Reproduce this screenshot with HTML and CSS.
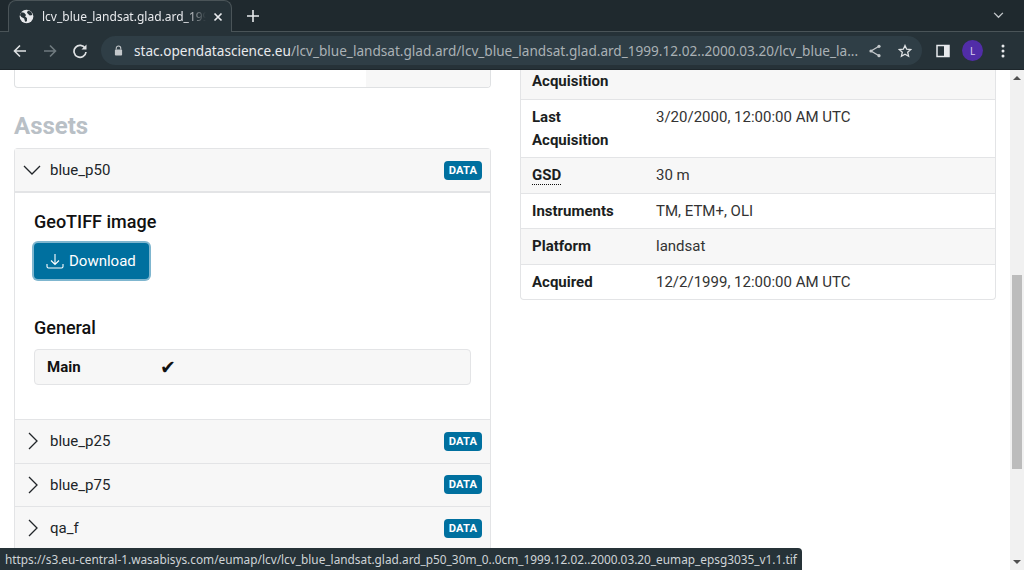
FILE: index.html
```html
<!DOCTYPE html>
<html lang="en">
<head>
<meta charset="utf-8">
<title>lcv_blue_landsat.glad.ard_1999</title>
<link rel="stylesheet" href="styles.css">
</head>
<body>
<header class="chrome">
  <div class="tabstrip">
    <div class="tab">
      <svg class="globe" viewBox="0 0 16 16" width="15" height="15"><circle cx="8" cy="8" r="7.300" fill="#e8eaed"/><path d="M2.500 3.500l3 .5 2 2.500-1 1.500 2 1.500v3.500l-2 .5-1-3.500-3-1.500-1.500-2zM9.500 1.500l3.500 1.500 1.300 3.500-2.800.5-1.500-1.500-1.500-1.500z" fill="#263238"/></svg>
      <span class="tab-title">lcv_blue_landsat.glad.ard_199</span>
      <svg class="tab-close" viewBox="0 0 10 10" width="10" height="10"><path d="M1.500 1.500l7 7M8.500 1.500l-7 7" stroke="#e8eaed" stroke-width="1.700"/></svg>
    </div>
    <svg class="newtab" viewBox="0 0 12 12" width="12" height="12"><path d="M6 0v12M0 6h12" stroke="#e8eaed" stroke-width="1.600"/></svg>
    <svg class="tabs-menu" viewBox="0 0 12 8" width="11" height="7"><path d="M1 1l5 5 5-5" fill="none" stroke="#c4c8cb" stroke-width="1.500"/></svg>
  </div>
  <div class="toolbar">
    <svg class="nav-icon" viewBox="0 0 16 16" width="16" height="16"><path d="M14 8H2.500M8 2.500L2.500 8 8 13.500" fill="none" stroke="#dfe2e4" stroke-width="1.600"/></svg>
    <svg class="nav-icon" viewBox="0 0 16 16" width="16" height="16"><path d="M2 8h11.500M8 2.500L13.500 8 8 13.500" fill="none" stroke="#6f7a7f" stroke-width="1.600"/></svg>
    <svg class="nav-icon" viewBox="0 0 16 16" width="16" height="16"><path d="M13.200 5.300A6 6 0 1 0 14 9" fill="none" stroke="#dfe2e4" stroke-width="1.700"/><path d="M14.500 1.500v5h-5z" fill="#dfe2e4"/></svg>
    <div class="omnibox">
      <svg class="lock" viewBox="0 0 10 12" width="9" height="11"><path d="M2.500 5V3.500a2.500 2.500 0 0 1 5 0V5" fill="none" stroke="#c4c8cb" stroke-width="1.200"/><rect x="1" y="5" width="8" height="6.500" rx="1" fill="#c4c8cb"/></svg>
      <span class="url"><span class="host">stac.opendatascience.eu</span>/lcv_blue_landsat.glad.ard/lcv_blue_landsat.glad.ard_1999.12.02..2000.03.20/lcv_blue_la...</span>
      <svg class="omni-icon" viewBox="0 0 14 14" width="14" height="14"><path d="M11 2.300L3 7l8 4.700" fill="none" stroke="#c4c8cb" stroke-width="1.300"/><circle cx="11" cy="2.300" r="1.600" fill="#c4c8cb"/><circle cx="3" cy="7" r="1.600" fill="#c4c8cb"/><circle cx="11" cy="11.700" r="1.600" fill="#c4c8cb"/></svg>
      <svg class="omni-icon" viewBox="0 0 14 14" width="14" height="14"><path d="M7 1.500l1.700 3.700 4 .4-3 2.700.9 4L7 10.300l-3.600 2 .9-4-3-2.700 4-.4z" fill="none" stroke="#dfe2e4" stroke-width="1.300"/></svg>
    </div>
    <svg class="side-icon" viewBox="0 0 14 14" width="14" height="14"><rect x="1" y="1.500" width="12" height="11" fill="none" stroke="#e8eaed" stroke-width="1.500"/><rect x="8" y="1.500" width="5" height="11" fill="#e8eaed"/></svg>
    <span class="avatar">L</span>
    <svg class="dots" viewBox="0 0 4 14" width="4" height="14"><circle cx="2" cy="2" r="1.500" fill="#e8eaed"/><circle cx="2" cy="7" r="1.500" fill="#e8eaed"/><circle cx="2" cy="12" r="1.500" fill="#e8eaed"/></svg>
  </div>
</header>

<div class="viewport">
  <main class="page">
    <section class="col">
      <div class="cut-card"><div class="cut-fill"></div></div>
      <h2 class="assets-title">Assets</h2>
      <div class="accordion">
        <div class="acc-head open-head">
          <svg class="chev-down" viewBox="0 0 18 10" width="18" height="10"><path d="M1 1l8 8 8-8" fill="none" stroke="#212529" stroke-width="1.300"/></svg>
          <span class="acc-name">blue_p50</span>
          <span class="badge">DATA</span>
        </div>
        <div class="acc-body">
          <h3 class="media-title">GeoTIFF image</h3>
          <button class="download">
            <svg viewBox="0 0 18 16" width="18" height="16"><path d="M9 1v10M5 7.500L9 11.500l4-4M1 11v2.500a1.500 1.500 0 0 0 1.500 1.500h13a1.500 1.500 0 0 0 1.500-1.500V11" fill="none" stroke="#fff" stroke-width="1.100"/></svg>
            <span>Download</span>
          </button>
          <h4 class="group-title">General</h4>
          <div class="main-row"><span class="main-key">Main</span><span class="main-val">✔</span></div>
        </div>
        <div class="acc-head">
          <svg class="chev-right" viewBox="0 0 10 18" width="10" height="18"><path d="M1 1l8 8-8 8" fill="none" stroke="#212529" stroke-width="1.300"/></svg>
          <span class="acc-name">blue_p25</span>
          <span class="badge">DATA</span>
        </div>
        <div class="acc-head">
          <svg class="chev-right" viewBox="0 0 10 18" width="10" height="18"><path d="M1 1l8 8-8 8" fill="none" stroke="#212529" stroke-width="1.300"/></svg>
          <span class="acc-name">blue_p75</span>
          <span class="badge">DATA</span>
        </div>
        <div class="acc-head">
          <svg class="chev-right" viewBox="0 0 10 18" width="10" height="18"><path d="M1 1l8 8-8 8" fill="none" stroke="#212529" stroke-width="1.300"/></svg>
          <span class="acc-name">qa_f</span>
          <span class="badge">DATA</span>
        </div>
      </div>
    </section>
    <section class="col">
      <div class="meta">
        <div class="meta-row odd first"><span class="meta-key">Acquisition</span><span></span></div>
        <div class="meta-row two"><span class="meta-key">Last Acquisition</span><span>3/20/2000, 12:00:00 AM UTC</span></div>
        <div class="meta-row odd"><span class="meta-key"><abbr class="gsd">GSD</abbr></span><span>30 m</span></div>
        <div class="meta-row"><span class="meta-key">Instruments</span><span>TM, ETM+, OLI</span></div>
        <div class="meta-row odd"><span class="meta-key">Platform</span><span>landsat</span></div>
        <div class="meta-row last"><span class="meta-key">Acquired</span><span>12/2/1999, 12:00:00 AM UTC</span></div>
      </div>
    </section>
  </main>
  <div class="scrollbar">
    <span class="arrow-up"></span>
    <span class="thumb"></span>
    <span class="arrow-down"></span>
  </div>
  <div class="status">https://s3.eu-central-1.wasabisys.com/eumap/lcv/lcv_blue_landsat.glad.ard_p50_30m_0..0cm_1999.12.02..2000.03.20_eumap_epsg3035_v1.1.tif</div>
</div>
</body>
</html>
```
FILE: styles.css
```css
* { box-sizing: border-box; }
html, body { margin: 0; height: 570px; overflow: hidden; background: #fff; }
body { font-family: Roboto, "Liberation Sans", sans-serif; color: #212529; }

.chrome { height: 70px; background: #263238; border-bottom: 1px solid #1d262b; font-family: "Noto Sans", "Open Sans", sans-serif; }
.tabstrip { height: 32px; background: #1f292e; display: flex; align-items: center; border-bottom: 1px solid #4a5458; padding-left: 8px; }
.tab { width: 224px; height: 32px; background: #263238; border: 1px solid #4a5458; border-bottom: 0; border-radius: 8px 8px 0 0; display: flex; align-items: center; padding: 0 9px 0 10px; align-self: flex-start; }
.globe { flex: none; }
.tab-title { margin-left: 8px; width: 164px; overflow: hidden; white-space: nowrap; font-size: 12px; color: #e8eaed; flex: none; -webkit-mask-image: linear-gradient(90deg, #000 88%, transparent); mask-image: linear-gradient(90deg, #000 88%, transparent); }
.tab-close { margin-left: 7px; flex: none; }
.newtab { margin-left: 15px; flex: none; }
.tabs-menu { margin-left: auto; margin-right: 20px; flex: none; }

.toolbar { height: 37px; display: flex; align-items: center; padding-left: 12px; }
.nav-icon { margin-right: 14px; flex: none; }
.nav-icon:nth-child(3) { margin-right: 13px; }
.omnibox { width: 821px; height: 29px; border-radius: 15px; background: #2f3e46; display: flex; align-items: center; padding-left: 13px; flex: none; }
.lock { flex: none; }
.url { margin-left: 11px; font-size: 13.600px; color: #aab1b5; white-space: nowrap; width: 734px; overflow: hidden; flex: none; }
.host { color: #e8eaed; }
.omni-icon { flex: none; }
.omni-icon + .omni-icon { margin-left: 16px; }
.side-icon { margin-left: 14px; flex: none; }
.avatar { margin-left: 12px; width: 21px; height: 21px; border-radius: 50%; background: #512da8; color: #d9cff0; font-size: 10px; display: flex; align-items: center; justify-content: center; flex: none; }
.dots { margin-left: 18px; flex: none; }

.viewport { position: relative; height: 500px; display: flex; overflow: hidden; }
.page { width: 1010px; height: 500px; padding: 0 14px; display: grid; grid-template-columns: 477px 476px; column-gap: 29px; align-items: start; overflow: hidden; }
.col { min-width: 0; }

.cut-card { height: 18px; border: 1px solid #dfe1e3; border-top: 0; border-radius: 0 0 4px 4px; display: flex; justify-content: flex-end; overflow: hidden; }
.cut-fill { width: 124px; background: #f7f7f7; }
.assets-title { margin: 23px 0 7px; height: 30px; line-height: 30px; font-size: 24px; font-weight: 700; color: #b9c0c6; }

.accordion { border: 1px solid #e3e4e6; border-bottom: 0; border-radius: 4px 4px 0 0; }
.acc-head { height: 43.500px; background: #f7f7f7; border-bottom: 1px solid #e3e4e6; display: flex; align-items: center; padding: 0 8px 0 13px; font-size: 15px; }
.open-head { height: 44px; border-bottom-width: 2px; padding-left: 8px; }
.chev-down { flex: none; margin-right: 9px; }
.chev-right { flex: none; margin-right: 12px; }
.acc-name { color: #212529; }
.badge { margin-left: auto; background: #00709f; color: #fff; font-size: 11.200px; font-weight: 700; line-height: 12px; padding: 4px 5px 3px; border-radius: 4px; letter-spacing: .1px; }
.acc-body { height: 227px; padding: 18px 19px 0; border-bottom: 1px solid #e3e4e6; }
.media-title { margin: 0 0 10px; font-size: 18px; line-height: 22px; font-weight: 500; color: #111; }
.download { display: flex; align-items: center; gap: 5px; width: 115px; height: 36px; padding: 0 0 0 12px; border: 0; box-shadow: 0 0 0 2px #7fb6cf; border-radius: 4px; background: #00709f; color: #fff; font: 400 15px Roboto, sans-serif; margin: 1px 0 0; }
.group-title { margin: 38px 0 10px; font-size: 18px; line-height: 22px; font-weight: 500; color: #111; }
.main-row { height: 36px; border: 1px solid #e3e4e6; border-radius: 4px; background: #f7f7f7; display: grid; grid-template-columns: 113px 1fr; align-items: center; padding-left: 12px; }
.main-key { font-weight: 700; font-size: 15px; color: #111; }
.main-val { font-family: "DejaVu Sans", sans-serif; font-size: 19px; color: #111; }

.meta { border: 1px solid #e3e4e6; border-top: 0; border-radius: 0 0 4px 4px; font-size: 15px; line-height: 22.500px; color: #333; }
.meta-row { display: grid; grid-template-columns: 124px 1fr; padding: 6px 11px; border-bottom: 1px solid #e3e4e6; }
.meta-row.odd { background: #f7f7f7; }
.meta-row.first { height: 30px; padding-top: 0; }
.meta-row.two { height: 58px; }
.meta-row.last { border-bottom: 0; }
.meta-key { font-weight: 700; color: #1b1e21; width: 90px; }
.gsd { border-bottom: 1px dotted #111; text-decoration: none; }

.scrollbar { flex: none; width: 14px; background: #f1f1f1; display: flex; flex-direction: column; align-items: center; position: relative; }
.arrow-up { margin-top: 6px; border: 4px solid transparent; border-top: 0; border-bottom: 4px solid #505050; }
.thumb { position: absolute; top: 205px; left: 2px; width: 10px; height: 194px; background: #bcbcbc; }
.arrow-down { margin-top: auto; margin-bottom: 6px; border: 4px solid transparent; border-bottom: 0; border-top: 4px solid #505050; }

.status { position: absolute; left: 0; bottom: 0; width: 802px; height: 22px; background: #263238; border-radius: 0 4px 0 0; color: #cfd4d7; font-family: "Noto Sans", "Open Sans", sans-serif; font-size: 11.830px; line-height: 22px; padding-left: 5px; white-space: nowrap; overflow: hidden; }
```
